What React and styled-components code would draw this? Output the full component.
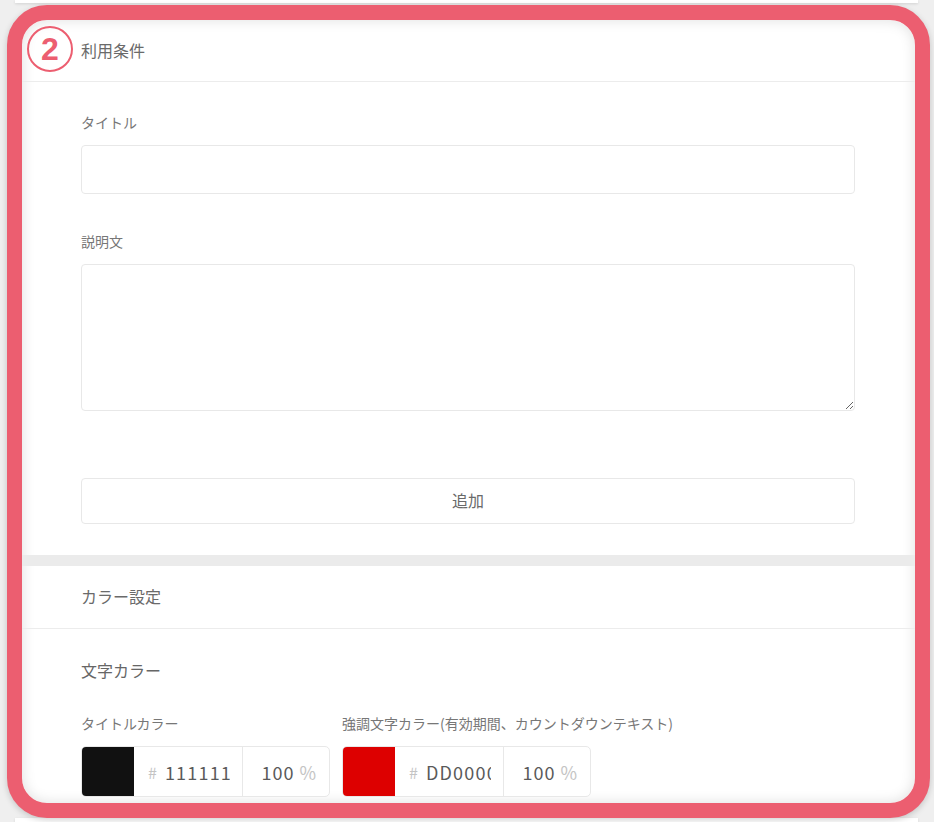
import React from "react";
import styled, { createGlobalStyle } from "styled-components";

const Global = createGlobalStyle`
  html, body { margin: 0; padding: 0; }
  body {
    background: #efefef;
    font-family: "Noto Sans CJK JP", "Noto Sans", sans-serif;
    color: #777;
  }
`;

const Page = styled.div`
  width: 934px;
  height: 822px;
  overflow: hidden;
  display: flex;
  flex-direction: column;
  background: #efefef;
`;

const CardEdge = styled.div`
  height: ${(p) => p.$h}px;
  margin: 0 16px 0 15px;
  background: #fff;
  box-shadow: 0 1px 3px rgba(0, 0, 0, 0.12);
  flex: none;
`;

const Frame = styled.div`
  position: relative;
  box-sizing: border-box;
  width: 923px;
  height: 813px;
  margin: 2px 0 0 7px;
  border: 15px solid #ec5e70;
  border-radius: 40px;
  background: #fff;
  box-shadow: 0 2px 6px rgba(0, 0, 0, 0.18);
  overflow: hidden;
  flex: none;
`;

const Inner = styled.div`
  height: 100%;
  border-radius: 25px;
  overflow: hidden;
  box-shadow: inset 0 0 14px rgba(0, 0, 0, 0.13);
  display: flex;
  flex-direction: column;
`;

const Badge = styled.div`
  position: absolute;
  left: 5px;
  top: 6px;
  width: 42px;
  height: 42px;
  border: 2px solid #ec5e70;
  border-radius: 50%;
  display: flex;
  align-items: center;
  justify-content: center;
  color: #ec5e70;
  font-family: "Liberation Sans", "Noto Sans", sans-serif;
  font-weight: 700;
  font-size: 32px;
  line-height: 1;
  z-index: 2;
`;

const SectionHeader = styled.div`
  box-sizing: border-box;
  height: ${(p) => p.$h}px;
  flex: none;
  display: flex;
  align-items: center;
  padding: 0 0 2px 59px;
  border-bottom: 1px solid #ececec;
  font-size: 16px;
  color: #6a6a6a;
`;

const Body = styled.div`
  padding: ${(p) => p.$pt}px 60px ${(p) => p.$pb}px 59px;
  display: flex;
  flex-direction: column;
  flex: none;
`;

const Label = styled.div`
  font-size: 14px;
  line-height: 20px;
  color: #777;
  margin-top: ${(p) => p.$mt || 0}px;
  margin-bottom: 13px;
  white-space: nowrap;
`;

const SubHeading = styled.div`
  font-size: 16px;
  line-height: 24px;
  color: #666;
  margin-bottom: 31px;
`;

const TextInput = styled.input`
  box-sizing: border-box;
  width: 100%;
  height: 49px;
  border: 1px solid #e8e8e8;
  border-radius: 4px;
  background: #fff;
  padding: 0 12px;
  font: inherit;
  outline: none;
  display: block;
`;

const TextArea = styled.textarea`
  box-sizing: border-box;
  width: 100%;
  height: 147px;
  border: 1px solid #e8e8e8;
  border-radius: 4px;
  background: #fff;
  padding: 10px 12px;
  font: inherit;
  outline: none;
  resize: vertical;
  display: block;
`;

const AddButton = styled.button`
  box-sizing: border-box;
  width: 100%;
  height: 46px;
  margin-top: 67px;
  border: 1px solid #e8e8e8;
  border-radius: 4px;
  background: #fff;
  font-family: inherit;
  font-size: 16px;
  color: #6a6a6a;
  cursor: pointer;
  padding: 0 0 2px;
`;

const Band = styled.div`
  height: 11px;
  background: #ebebeb;
  flex: none;
`;

const ColorRow = styled.div`
  display: flex;
  gap: 12px;
`;

const ColorField = styled.div`
  display: flex;
  flex-direction: column;
`;

const ColorBox = styled.div`
  box-sizing: border-box;
  width: 249px;
  height: 51px;
  display: flex;
  border: 1px solid #e8e8e8;
  border-radius: 5px;
  overflow: hidden;
  background: #fff;
`;

const Swatch = styled.div`
  width: 53px;
  flex: none;
  background: ${(p) => p.$color};
  margin: -1px 0 -1px -1px;
`;

const HexPart = styled.div`
  width: 109px;
  flex: none;
  display: flex;
  align-items: center;
  padding-left: 14px;
  box-sizing: border-box;
  border-right: 1px solid #e8e8e8;
`;

const Hash = styled.span`
  color: #c4c4c4;
  font-size: 16px;
  margin-right: 8px;
`;

const HexInput = styled.input`
  width: 65px;
  border: none;
  padding: 0;
  outline: none;
  background: transparent;
  font-family: inherit;
  font-size: 18px;
  letter-spacing: 1.2px;
  color: #5a5a5a;
`;

const PercentPart = styled.div`
  flex: 1;
  display: flex;
  align-items: center;
  justify-content: flex-end;
  padding-right: 12px;
  font-size: 18px;
  letter-spacing: 1px;
  color: #5a5a5a;
`;

const Pct = styled.span`
  color: #c4c4c4;
  margin-left: 5px;
`;

function ColorInput({ label, color, hex }) {
  return (
    <ColorField>
      <Label>{label}</Label>
      <ColorBox>
        <Swatch $color={color} />
        <HexPart>
          <Hash>#</Hash>
          <HexInput readOnly value={hex} />
        </HexPart>
        <PercentPart>
          100<Pct>%</Pct>
        </PercentPart>
      </ColorBox>
    </ColorField>
  );
}

export default function App() {
  return (
    <>
      <Global />
      <Page>
        <CardEdge $h={3} />
        <Frame>
          <Badge>2</Badge>
          <Inner>
            <SectionHeader $h={62}>利用条件</SectionHeader>
            <Body $pt={30} $pb={31}>
              <Label>タイトル</Label>
              <TextInput />
              <Label $mt={37}>説明文</Label>
              <TextArea />
              <AddButton>追加</AddButton>
            </Body>
            <Band />
            <SectionHeader $h={63}>カラー設定</SectionHeader>
            <Body $pt={29} $pb={0}>
              <SubHeading>文字カラー</SubHeading>
              <ColorRow>
                <ColorInput label="タイトルカラー" color="#111111" hex="111111" />
                <ColorInput
                  label="強調文字カラー(有効期間、カウントダウンテキスト)"
                  color="#dd0000"
                  hex="DD0000"
                />
              </ColorRow>
            </Body>
          </Inner>
        </Frame>
        <CardEdge $h={4} />
      </Page>
    </>
  );
}
